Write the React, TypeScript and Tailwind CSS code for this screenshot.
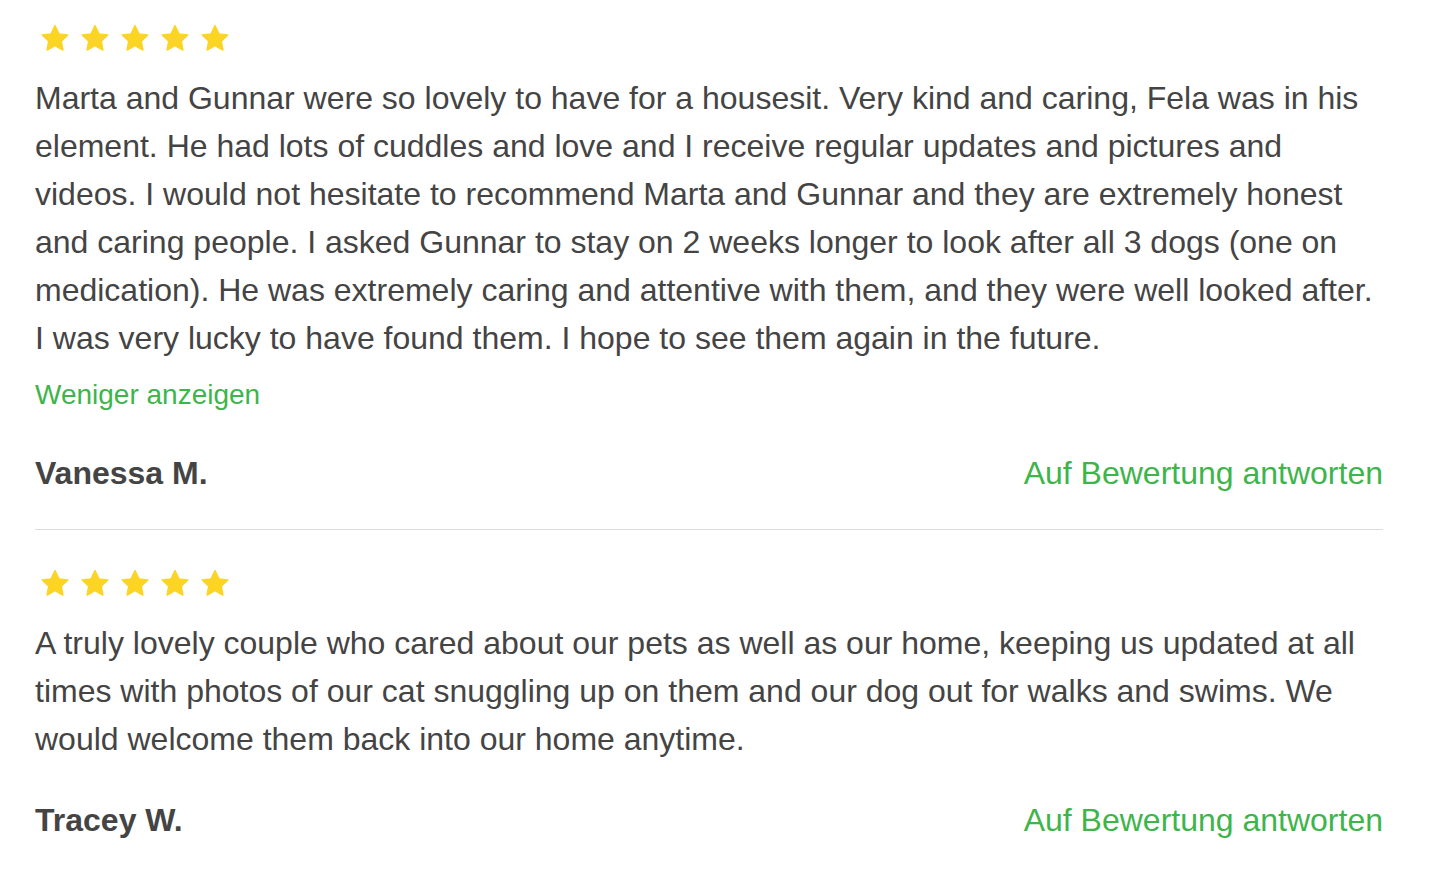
const reviews = [
  {
    text: "Marta and Gunnar were so lovely to have for a housesit. Very kind and caring, Fela was in his element. He had lots of cuddles and love and I receive regular updates and pictures and videos. I would not hesitate to recommend Marta and Gunnar and they are extremely honest and caring people. I asked Gunnar to stay on 2 weeks longer to look after all 3 dogs (one on medication). He was extremely caring and attentive with them, and they were well looked after. I was very lucky to have found them. I hope to see them again in the future.",
    name: "Vanessa M.",
    less: true,
  },
  {
    text: "A truly lovely couple who cared about our pets as well as our home, keeping us updated at all times with photos of our cat snuggling up on them and our dog out for walks and swims. We would welcome them back into our home anytime.",
    name: "Tracey W.",
    less: false,
  },
]

function Star() {
  return (
    <svg width="30" height="29" viewBox="0 0 24 23">
      <path
        d="M12 1.2l3.1 6.6 7.1.9-5.2 4.9 1.3 7.1L12 17.2l-6.3 3.5 1.3-7.1-5.2-4.9 7.1-.9z"
        fill="#fcd424"
        stroke="#fcd424"
        strokeWidth="1.2"
        strokeLinejoin="round"
      />
    </svg>
  )
}

export default function App() {
  return (
    <div className="min-h-screen bg-white px-[35px] pt-[24px] text-[#444] font-['Liberation_Sans',Arial,sans-serif]" style={{ width: 1418 }}>
      {reviews.map((r, i) => (
        <div key={i} className={i > 0 ? "border-t border-[#dcdcdc] pt-[39px]" : ""}>

          {/* Stars */}
          <div className="flex gap-[10px] pl-[5px]">
            {[0, 1, 2, 3, 4].map((s) => (
              <Star key={s} />
            ))}
          </div>

          {/* Text */}
          <p className="mt-[21px] text-[32px] leading-[48px]">{r.text}</p>

          {r.less && (
            <div className="mt-[15px] text-[28px] leading-[36px] text-[#3db54a]">
              Weniger anzeigen
            </div>
          )}

          {/* Footer */}
          <div className={`flex items-center justify-between ${r.less ? "mt-[42px]" : "mt-[39px]"} ${i === 0 ? "pb-[38px]" : ""}`}>
            <div className="text-[32px] leading-[36px] font-bold">{r.name}</div>
            <div className="text-[32px] leading-[36px] text-[#3db54a]">Auf Bewertung antworten</div>
          </div>

        </div>
      ))}
    </div>
  )
}
